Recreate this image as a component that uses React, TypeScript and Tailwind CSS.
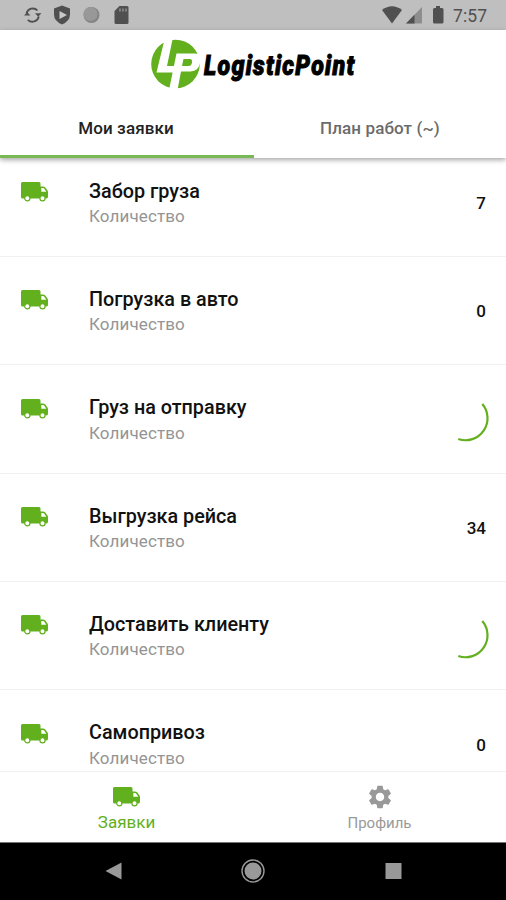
import { MdSettings } from 'react-icons/md';

interface RequestRow {
  title: string;
  count: number | null;
}

const requests: RequestRow[] = [
  { title: 'Забор груза', count: 7 },
  { title: 'Погрузка в авто', count: 0 },
  { title: 'Груз на отправку', count: null },
  { title: 'Выгрузка рейса', count: 34 },
  { title: 'Доставить клиенту', count: null },
  { title: 'Самопривоз', count: 0 },
];

function TruckIcon() {
  return (
    <svg viewBox="0 0 27 20" className="block h-5 w-[27px] shrink-0">
      <path
        fill="#62b01e"
        d="M1.500 0H18Q19.500 0 19.500 1.500V4.500H22Q23.500 4.500 24.300 5.500L26.500 8.500Q27 9.200 27 10V14.500Q27 16.500 25.500 16.500H1.500Q0 16.500 0 15V1.500Q0 0 1.500 0ZM20.300 6V9.800H25.300L23.300 6.800Q22.800 6 22 6Z"
      />
      <circle cx="6.300" cy="16.300" r="2.600" fill="#fff" stroke="#62b01e" strokeWidth="1.200" />
      <circle cx="21.500" cy="16.300" r="2.600" fill="#fff" stroke="#62b01e" strokeWidth="1.200" />
    </svg>
  );
}

function Spinner() {
  return (
    <svg viewBox="0 0 44 48" className="block h-12 w-11" fill="none">
      <path d="M37.300 9A22 22 0 0 1 13.300 44" stroke="#62b01e" strokeWidth="2.200" />
    </svg>
  );
}

function StatusBar() {
  return (
    <div className="h-[30px] shrink-0 bg-[#bfbfbf]">
      <svg viewBox="0 0 506 30" className="block h-[30px] w-full" fill="#505050">
        <g fill="none" stroke="#505050" strokeWidth="1.800">
          <path d="M26.500 13.500A6.500 6.500 0 0 1 37.500 10.500M38.800 16.500A6.500 6.500 0 0 1 27.800 19.800" />
        </g>
        <path d="M35 13.300H41.500L38.200 16.800ZM24 15.500H30.500L27.200 12.300Z" />
        <path d="M62 5.500L70 8.500V14.500Q70 21 62 24.500Q54 21 54 14.500V8.500Z" />
        <path d="M59.500 11L67 15L59.500 19Z" fill="#c8c8c8" />
        <circle cx="91.500" cy="15" r="8" fill="#858585" />
        <circle cx="90.500" cy="14" r="7" fill="#989898" />
        <path d="M119.500 6H127Q128.500 6 128.500 7.500V22.500Q128.500 24 127 24H116Q114.500 24 114.500 22.500V11Z" />
        <path d="M120 8.500V11.500M123 8.500V11.500M126 8.500V11.500" stroke="#999" strokeWidth="1.300" />
        <path d="M382 10Q392 2.500 402 10L392 23.500Z" />
        <path d="M422 7V23.500H406Z" fill="#8d8d8d" />
        <path d="M414.500 14.800V23.500H406Z" />
        <path d="M436 6H440V8H442Q443.500 8 443.500 9.500V22Q443.500 23.500 442 23.500H434.500Q433 23.500 433 22V9.500Q433 8 434.500 8H436Z" />
        <text x="453" y="22" fontSize="17.500" textLength="34" className="font-['Roboto']">
          7:57
        </text>
      </svg>
    </div>
  );
}

function Logo() {
  return (
    <svg viewBox="0 0 230 54" className="block h-[54px] w-[230px] overflow-visible" role="img" aria-label="LogisticPoint">
      <circle cx="25.500" cy="27" r="24.300" fill="#62b01e" />
      <path d="M14.500 2.500H22.500L17 29H25L23.500 35.500H6.500Z" fill="#fff" />
      <path
        d="M26.500 16.500H45Q51.500 16.500 50.500 24Q49 34.500 40.500 34.500H31L27.500 53H19ZM33.500 22L32 29H38.500Q41.500 29 42 25.500Q42.500 22 40 22Z"
        fill="#fff"
        fillRule="evenodd"
      />
      <g transform="translate(54 37.500) scale(0.830 1)">
        <text
          fontSize="28"
          textLength="181"
          stroke="#000"
          strokeWidth="1"
          className="font-['Roboto'] font-black italic"
        >
          LogisticPoint
        </text>
      </g>
    </svg>
  );
}

function Header() {
  return (
    <header className="relative z-10 flex h-[128px] shrink-0 flex-col bg-white shadow-[0_2px_5px_rgba(0,0,0,0.35)]">
      <div className="flex h-[68px] justify-center pt-[7px] pl-6">
        <Logo />
      </div>
      <nav className="grid flex-1 grid-cols-[254px_252px] text-center text-[17px] font-medium">
        <button className="border-b-3 border-[#78b956] pt-[4px] pr-[2px] tracking-[0.100px] text-[#222]">Мои заявки</button>
        <button className="border-b-3 border-transparent pt-[4px] tracking-[0.100px] text-[#6b6b6b]">План работ (~)</button>
      </nav>
    </header>
  );
}

function Row({ title, count }: RequestRow) {
  return (
    <li className="flex h-[108.350px] shrink-0 border-b border-[#f1f1f1] pl-[21px] pt-[27px]">
      <div className="w-[68px] pt-[6.500px]">
        <TruckIcon />
      </div>
      <div className="flex-1">
        <div className="pt-[3px] text-[19.800px] leading-[26px] font-medium text-[#111]">{title}</div>
        <div className="-mt-[1.500px] text-[17px] leading-[26px] tracking-[0.120px] text-[#949494]">Количество</div>
      </div>
      {count === null ? (
        <div className="pt-[3px] pr-[17px]">
          <Spinner />
        </div>
      ) : (
        <div className="pr-5 pt-[15.500px] text-[17px] leading-6 font-medium text-[#111]">{count}</div>
      )}
    </li>
  );
}

export default function App() {
  return (
    <div className="flex h-[900px] w-[506px] flex-col overflow-hidden bg-white font-['Roboto',sans-serif]">
      <StatusBar />
      <Header />
      <ul className="-mt-[9.500px] flex min-h-0 flex-1 flex-col overflow-hidden">
        {requests.map((request) => (
          <Row key={request.title} {...request} />
        ))}
      </ul>

      {/* Bottom tabs */}
      <nav className="grid h-[71px] shrink-0 grid-cols-2 border-t border-[#f1f1f1] bg-white">
        <button className="flex flex-col items-center pt-[15px] text-[17px] leading-5 text-[#62b01e]">
          <TruckIcon />
          <span className="mt-[5px]">Заявки</span>
        </button>
        <button className="flex flex-col items-center pt-[11px] text-[15px] leading-5 text-[#999]">
          <MdSettings className="h-7 w-7" />
          <span className="mt-[2px]">Профиль</span>
        </button>
      </nav>

      {/* Android navigation */}
      <div className="h-[58px] shrink-0 border-t border-[#777] bg-black">
        <svg viewBox="0 0 506 57" className="block h-[57px] w-full" fill="#999">
          <path d="M105.500 28L121.500 19.500V36.500Z" />
          <circle cx="253" cy="28" r="8.500" />
          <circle cx="253" cy="28" r="11" fill="none" stroke="#999" strokeWidth="1.400" />
          <rect x="385.500" y="20" width="16" height="16" />
        </svg>
      </div>
    </div>
  );
}
